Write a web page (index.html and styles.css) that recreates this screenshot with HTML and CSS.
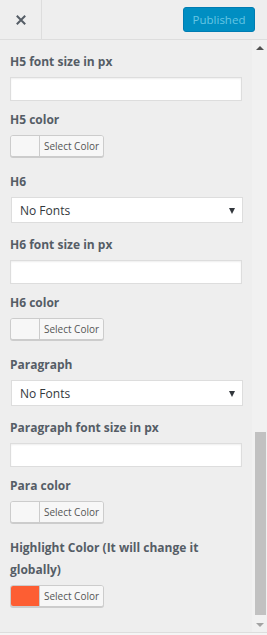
FILE: index.html
```html
<!DOCTYPE html>
<html>
<head>
	<meta charset="utf-8">
	<title>Customizer - Typography</title>
	<link rel="stylesheet" href="styles.css">
</head>
<body>

<!-- HEADER -->
<div class="header">
	<div class="close">
		<svg width="12" height="12" viewBox="0 0 12 12"><path d="M1.8 1.8 L10.2 10.2 M10.2 1.8 L1.8 10.2" stroke="#555d66" stroke-width="2" fill="none"/></svg>
	</div>
	<div class="actions">
		<button class="publish">Published</button>
	</div>
</div>

<div class="main">
	<div class="controls">
		<div class="ctl text">
			<span class="title">H5 font size in px</span>
			<input type="text" class="field">
		</div>
		<div class="ctl color">
			<span class="title">H5 color</span>
			<div class="picker"><span class="swatch"></span><span class="pick-label">Select Color</span></div>
		</div>
		<div class="ctl select">
			<span class="title">H6</span>
			<div class="dropdown"><span>No Fonts</span><span class="arrow"></span></div>
		</div>
		<div class="ctl text">
			<span class="title">H6 font size in px</span>
			<input type="text" class="field">
		</div>
		<div class="ctl color">
			<span class="title">H6 color</span>
			<div class="picker"><span class="swatch"></span><span class="pick-label">Select Color</span></div>
		</div>
		<div class="ctl select">
			<span class="title">Paragraph</span>
			<div class="dropdown"><span>No Fonts</span><span class="arrow"></span></div>
		</div>
		<div class="ctl text">
			<span class="title">Paragraph font size in px</span>
			<input type="text" class="field">
		</div>
		<div class="ctl color">
			<span class="title">Para color</span>
			<div class="picker"><span class="swatch"></span><span class="pick-label">Select Color</span></div>
		</div>
		<div class="ctl color">
			<span class="title">Highlight Color (It will change it globally)</span>
			<div class="picker"><span class="swatch orange"></span><span class="pick-label">Select Color</span></div>
		</div>
	</div>
	<div class="scrollbar">
		<div class="arrow-up"></div>
		<div class="track"><div class="thumb"></div></div>
		<div class="arrow-down"></div>
	</div>
</div>
<div class="footer"></div>

</body>
</html>
```

FILE: styles.css
```css
html, body {
	margin: 0;
	padding: 0;
}
body {
	width: 267px;
	height: 635px;
	overflow: hidden;
	background: #eeeeee;
	font-family: 'Open Sans', sans-serif;
	color: #555d66;
	display: flex;
	flex-direction: column;
}

/* header */
.header {
	height: 39px;
	border-bottom: 1px solid #dddddd;
	display: flex;
	flex-shrink: 0;
}
.close {
	width: 41px;
	border-right: 1px solid #dddddd;
	display: flex;
	justify-content: center;
	align-items: center;
}
.actions {
	flex: 1;
	display: flex;
	justify-content: flex-end;
	align-items: flex-start;
	padding: 7px 12px 0 0;
}
.publish {
	width: 72px;
	height: 25px;
	padding: 0;
	background: #008ec2;
	border: 1px solid #007cb2;
	border-radius: 3px;
	color: #66c6e4;
	font-family: 'Open Sans', sans-serif;
	font-size: 11.5px;
	line-height: 22px;
}

/* main */
.main {
	flex: 1;
	display: flex;
	overflow: hidden;
}
.controls {
	flex: 1;
	padding: 11px 0 0 10px;
	display: flex;
	flex-direction: column;
}
.ctl {
	display: flex;
	flex-direction: column;
	align-items: flex-start;
}
.title {
	font-size: 12px;
	font-weight: 700;
	line-height: 22px;
	margin-bottom: 4px;
	max-width: 215px;
}
.ctl.text {
	margin-bottom: 8px;
}
.ctl.color {
	margin-bottom: 14px;
}
.ctl.select {
	margin-bottom: 11px;
}

.field {
	box-sizing: border-box;
	width: 232px;
	height: 24px;
	margin: 0;
	border: 1px solid #dddddd;
	background: #ffffff;
	box-shadow: inset 0 1px 2px rgba(0,0,0,.07);
	padding: 0 6px;
}

.dropdown {
	box-sizing: border-box;
	width: 232px;
	height: 26px;
	margin-left: 1px;
	border: 1px solid #dddddd;
	background: #ffffff;
	display: flex;
	align-items: center;
	justify-content: space-between;
	padding: 0 7px 0 8px;
	font-size: 12px;
	color: #32373c;
}
.arrow {
	width: 0;
	height: 0;
	border-left: 3.5px solid transparent;
	border-right: 3.5px solid transparent;
	border-top: 6px solid #32373c;
	margin-top: 1px;
}

.picker {
	box-sizing: border-box;
	width: 94px;
	height: 22px;
	border: 1px solid #cccccc;
	border-radius: 3px;
	background: #f7f7f7;
	box-shadow: 0 1px 0 #cccccc;
	display: flex;
	overflow: hidden;
}
.swatch {
	width: 28px;
	background: #f7f7f7;
	border-right: 1px solid #cccccc;
}
.swatch.orange {
	background: #fd5e33;
}
.pick-label {
	flex: 1;
	text-align: center;
	font-size: 10px;
	line-height: 20px;
	color: #555555;
	background: #f7f7f7;
}

/* fake scrollbar */
.scrollbar {
	width: 15px;
	background: #f1f1f1;
	display: flex;
	flex-direction: column;
	align-items: center;
}
.arrow-up, .arrow-down {
	height: 15px;
	width: 15px;
	display: flex;
	justify-content: center;
	align-items: center;
	flex-shrink: 0;
}
.arrow-up::after {
	content: "";
	border-left: 4px solid transparent;
	border-right: 4px solid transparent;
	border-bottom: 4px solid #505050;
}
.arrow-down::after {
	content: "";
	border-left: 4px solid transparent;
	border-right: 4px solid transparent;
	border-top: 4px solid #a3a3a3;
}
.track {
	flex: 1;
	width: 15px;
	display: flex;
	flex-direction: column;
	justify-content: flex-end;
	align-items: center;
}
.thumb {
	width: 11px;
	height: 183px;
	margin-left: 2px;
	margin-bottom: 2px;
	background: #c1c1c1;
}

.footer {
	height: 2px;
	border-top: 1px solid #dddddd;
	background: #f5f5f5;
	flex-shrink: 0;
}
```
